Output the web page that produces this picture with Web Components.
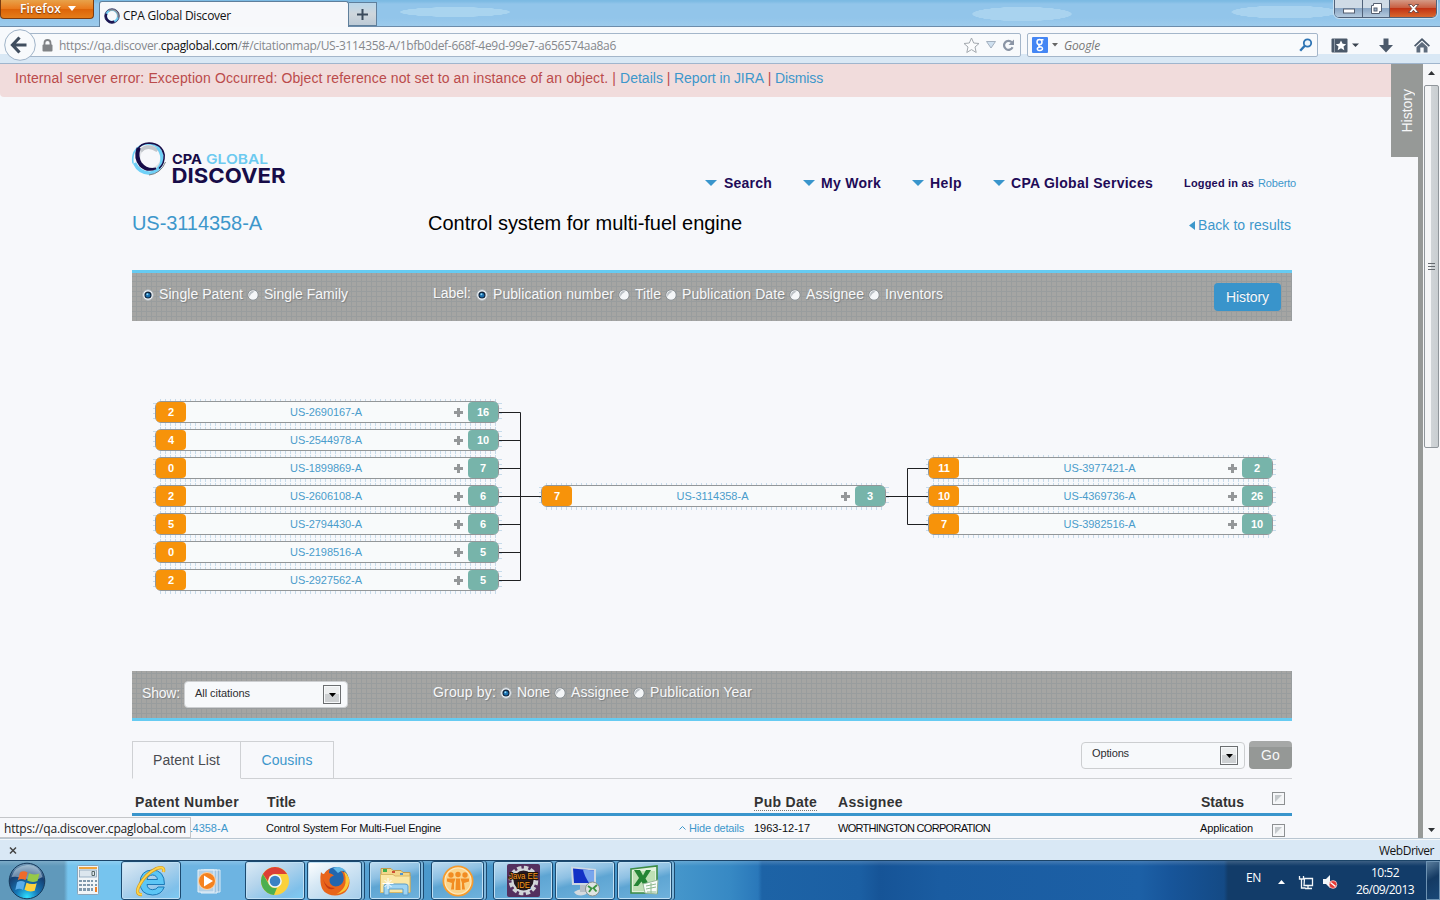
<!DOCTYPE html>
<html lang="en">
<head>
<meta charset="utf-8">
<title>CPA Global Discover</title>
<style>
html,body{margin:0;padding:0;width:1440px;height:900px;overflow:hidden;background:#f7f8fb}
body{font-family:"Liberation Sans",Arial,sans-serif;font-size:14px}
</style>
</head>
<body>
<desktop-screen></desktop-screen>
<script>
const UI = 'font-family:"Open Sans","Noto Sans",sans-serif;';
const RESET = '*{box-sizing:border-box}:host{box-sizing:border-box}svg{display:block;flex:none;overflow:visible}';
function make(name, css, html, after) {
  customElements.define(name, class extends HTMLElement {
    connectedCallback() {
      if (this.shadowRoot) return;
      const root = this.attachShadow({ mode: 'open' });
      const t = document.createElement('template');
      t.innerHTML = '<style>' + RESET + css + '</style>' + (typeof html === 'function' ? html(this) : html);
      root.append(t.content.cloneNode(true));
      if (after) after(this);
    }
  });
}

/* One-line label whose tracking is adjusted to fill the width in "w". */
function defineLabel() {
  make('x-t', ':host{display:block;flex:none;white-space:pre;line-height:1.25;padding-top:var(--drop,0)}span{display:inline-block}', '<span><slot></slot></span>', el => {
    const w = parseFloat(el.getAttribute('w'));
    const span = el.shadowRoot.querySelector('span');
    const n = el.textContent.length;
    span.style.letterSpacing = ((w - span.getBoundingClientRect().width) / n).toFixed(4) + 'px';
    el.style.width = w + 'px';
  });
}

/* ---------- small controls ---------- */
make('radio-option', `:host{display:flex;gap:5px;align-items:center;flex:none}
svg{margin-top:2px}`, el => `<svg width="12" height="12" viewBox="0 0 12 12">
<circle cx="6" cy="6" r="5.2" fill="#f4f6f8" stroke="${el.hasAttribute('checked') ? '#b7bec4' : '#858b90'}" stroke-width=".9"/>
${el.hasAttribute('checked') ? '<circle cx="6" cy="6" r="3.6" fill="#10263f"/><circle cx="6" cy="6.2" r="2.3" fill="#1a6fae"/><circle cx="5.4" cy="5.2" r="1" fill="#8fd8f7"/>' : '<path d="M2.4 8A4 4 0 0 1 7.5 2.4Q4 4 2.4 8Z" fill="#b9bfc4"/>'}</svg>
<x-t w="${el.getAttribute('w')}">${el.textContent}</x-t>`);

make('select-box', `:host{display:flex;width:164px;height:27px;border:1px solid #ccced0;border-radius:4px;background:#f7f9fb;padding:3px 6px 3px 10px;justify-content:space-between;font-size:11px;color:#2c2d30;text-shadow:none;flex:none}
i{width:18px;height:19px;border:1px solid #6b6e70;outline:1px solid #f7f9fb;outline-offset:-2px;background:linear-gradient(#eceeef 45%,#cdd0d2 45%);display:flex;align-items:center;justify-content:center}`,
el => `<x-t w="${el.getAttribute('w')}">${el.textContent}</x-t><i><svg width="7" height="4"><path d="M0 0h7L3.500 4z" fill="#000"/></svg></i>`);

make('check-box', `:host{display:block;width:13px;height:13px;border:1px solid #8d9092;background:#f6f7f9;padding:2px}
i{display:block;width:7px;height:7px;background:linear-gradient(135deg,#c4c8cb 48%,#f1f3f4 52%)}`, '<i></i>');

make('tool-bar', `:host{display:flex;align-items:center;height:51px;color:#f7f8f9;text-shadow:1px 1px 1px #7b7f81;background-color:#a5a5a3;
background-image:repeating-linear-gradient(90deg,transparent 0 4px,#999d9e 4px 5px),repeating-linear-gradient(0deg,transparent 0 4px,#999d9e 4px 5px)}
:host([edge=top]){border-top:3px solid #66cbf2;padding:0 11px 6px 10px}
:host([edge=bottom]){height:50px;border-bottom:3px solid #66cbf2;padding:0 11px 4px 10px}`, '<slot></slot>');

/* ---------- browser chrome ---------- */
const swirl = `<svg width="16" height="16" viewBox="0 0 34 34"><g fill="none"><circle cx="17" cy="17" r="13" stroke="#6ccaf0" stroke-width="5"/><path d="M5 12A13 13 0 0 0 22 29" stroke="#1c1250" stroke-width="5"/><path d="M10 6A13 13 0 0 1 30 20" stroke="#8f9499" stroke-width="4"/><circle cx="17" cy="17" r="15.500" stroke="#2b2a5c" stroke-width="1.600"/></g></svg>`;

make('tab-strip', `:host{display:flex;height:27px;${UI}font-size:12px;border-bottom:1px solid #6c8cab;
background:radial-gradient(ellipse 90px 8px at 455px 12px,#a9d4ef 60%,transparent 62%),radial-gradient(ellipse 70px 10px at 1022px 14px,#a9d3ef 70%,transparent 72%),radial-gradient(ellipse 75px 9px at 1285px 12px,#a9d3ef 70%,transparent 72%),linear-gradient(#7cbae3 0 1px,#92c5ea 4px 18px,#9dcbec)}
.ff{width:94px;height:19px;border:1px solid #7c3c10;border-top:0;border-radius:0 0 4px 4px;background:linear-gradient(#e8a24a,#ea7a1c 48%,#dd6408 52%,#e57d1a);color:#fff;display:flex;gap:7px;padding-left:19px;font-weight:600;text-shadow:0 1px 1px #7c3c10}
.ff x-t{margin-top:1px}.ff svg{margin-top:6px}
.tab{width:250px;height:26px;margin:1px 0 0 5px;background:#f7f8fb;border:1px solid #5f7f9c;border-bottom:0;border-radius:3px 3px 0 0;display:flex;align-items:center;padding:2px 0 0 4px;gap:3px;color:#111}
.new{width:28px;height:24px;margin-top:2px;border:1px solid #5f7f9c;border-left:0;background:linear-gradient(#b9d6ea,#cfd6dc 50%,#bccad6);display:flex;align-items:center;justify-content:center}
.win{margin:0 3px 0 auto;width:103px;height:18px;border:1px solid #50627a;border-top:0;border-radius:0 0 5px 5px;display:flex;overflow:hidden;outline:1px solid #c7dff0}
.win b{display:flex;align-items:center;justify-content:center;border-right:1px solid #50627a;background:linear-gradient(#cfdbe6 45%,#8aa6c4 50%,#b3c9dd);width:28px}
.win b+b{width:27px}.win b:last-child{flex:1;border:0;background:linear-gradient(#d49a86 0,#c95f42 45%,#c23314 50%,#d8672e)}`,
`<div class="ff"><x-t w="41">Firefox</x-t><svg width="8" height="5"><path d="M0 0h8L4 5z" fill="#fff"/></svg></div>
<div class="tab">${swirl}<x-t w="108">CPA Global Discover</x-t></div>
<div class="new"><svg width="11" height="11"><path d="M4.500 0h2v4.500h4.500v2H6.500V11h-2V6.500H0v-2h4.500z" fill="#3b4b5c"/></svg></div>
<div class="win"><b><svg width="12" height="10"><rect x=".5" y="5" width="11" height="4" fill="#fff" stroke="#555f70"/></svg></b><b><svg width="13" height="13"><path d="M3.500 1.500h8v8h-2v2h-8v-8h2z" fill="#fff" stroke="#555f70"/><rect x="4" y="6" width="3" height="3" fill="#9db4cc" stroke="#555f70"/></svg></b><b><svg width="13" height="11"><path d="M1.500 1.500h3l2 2.200 2-2.200h3l-3.300 4 3.300 4h-3l-2-2.300-2 2.300h-3l3.300-4z" fill="#fff" stroke="#5a3a38" stroke-width=".8"/></svg></b></div>`);

make('nav-bar', `:host{display:flex;height:37px;background:linear-gradient(#f7f9fc 27px,#d9e8f5 27px);border-bottom:1px solid #9fb5cd;${UI}font-size:12px;padding-top:2px;align-items:flex-start}
.back{margin:0 0 0 4px;z-index:1}
.url,.search{height:24px;margin-top:4px;border:1px solid #a4b6ca;background:#f8fafc;display:flex;align-items:center;border-radius:2px}
.url{width:1003px;margin-left:-18px;padding-left:23px;color:#85888c}.url em{font-style:normal;color:#111}
.url x-t{margin-left:6px}.search{width:291px;margin-left:6px;padding-left:4px;color:#777}
.search x-t{margin-left:6px;font-style:italic}`,
`<svg class="back" width="32" height="32"><circle cx="16" cy="16" r="15.300" fill="#f8fafc" stroke="#9fb3c8"/><path d="M15.500 8.500L8.500 16l7 7.500M9 16h13.500" stroke="#3f4d5e" stroke-width="3.200" fill="none"/></svg>
<div class="url"><svg width="11" height="13"><path d="M2.500 6V4a3 3 0 0 1 6 0v2" fill="none" stroke="#808386" stroke-width="1.800"/><rect x=".5" y="5.500" width="10" height="7" rx="1" fill="#808386"/></svg><x-t w="557">https://qa.discover.<em>cpaglobal.com</em>/#/citationmap/US-3114358-A/1bfb0def-668f-4e9d-99e7-a656574aa8a6</x-t>
<svg style="margin-left:347px" width="17" height="17"><path d="M8.500 1l2.200 5 5.300.5-4 3.500 1.200 5.500-4.700-2.900-4.700 2.900L5 10 1 6.500 6.300 6z" fill="#fbfcfd" stroke="#a3a9af"/></svg>
<svg style="margin-left:6px" width="10" height="8"><path d="M.5.500h9L5 7z" fill="#cfe0ef" stroke="#a3b0bf"/></svg>
<svg style="margin-left:6px" width="13" height="13"><path d="M9.800 3.200A4.500 4.500 0 1 0 10.600 8.300" fill="none" stroke="#8b95a5" stroke-width="2.200"/><path d="M12 .5v5.500H6.500z" fill="#8b95a5"/></svg></div>
<div class="search"><svg width="16" height="16"><rect width="16" height="16" rx="1" fill="#4486f4"/><g fill="none" stroke="#fff" stroke-width="1.500"><ellipse cx="7.500" cy="5" rx="2.500" ry="2.600"/><path d="M9 2.800h2.500M7.500 7.600q-1.700 1.300.8 2.100 3 .8 1.900 2.900-1.600 1.700-4.300.5-1.500-1.600.6-2.800l2-.3"/></g></svg><svg style="margin-left:4px" width="6" height="4"><path d="M0 0h6L3 3.500z" fill="#666"/></svg><x-t w="36">Google</x-t>
<svg style="margin-left:199px" width="14" height="14"><circle cx="8.500" cy="5" r="3.700" fill="#eef6fc" stroke="#2d74b4" stroke-width="1.800"/><path d="M5.800 7.800L1.200 12.800" stroke="#2d74b4" stroke-width="2.400"/></svg></div>
<svg style="margin:9px 0 0 13px" width="28" height="15"><rect x=".5" y=".5" width="16" height="14" rx="1" fill="#4a5869"/><path d="M3.500 1v13" stroke="#8c98a5"/><path d="M10 2.500l1.600 3.300 3.600.4-2.700 2.400.8 3.600-3.300-1.900-3.300 1.900.8-3.600L4.800 6.200l3.600-.4z" fill="#fff"/><path d="M21 5.500h7L24.500 9z" fill="#39434f"/></svg>
<svg style="margin:9px 0 0 20px" width="14" height="15"><path d="M4.500.500h5v6.500H14L7 14.500 0 7h4.500z" fill="#4c5a6b"/></svg>
<svg style="margin:9px 0 0 21px" width="16" height="15"><path d="M8 0L0 7.500l1.200 1.200L8 2.600l6.800 6.100L16 7.500z" fill="#4c5a6b"/><path d="M8 4L2.500 9v5.500h3.800V9.500h3.400v5h3.800V9z" fill="#5d6b7c"/></svg>`);

/* ---------- page header ---------- */
make('site-logo', ':host{display:block;flex:none;width:155px;height:50px}', `<svg width="155" height="50" viewBox="132 140 155 50"><g fill="none">
<circle cx="150.300" cy="157.700" r="11.500" stroke="#dfe2e6" stroke-width="3"/>
<path d="M140.500 151Q147 143.500 157.500 150.500" stroke="#c3c7cc" stroke-width="3.500"/>
<path d="M134.500 163Q139 173 150 173.200 158 172 161.300 164 164 155 157.500 147" stroke="#6fd0f7" stroke-width="3.400"/>
<path d="M133 163.500Q131 150 142 145 153 141.500 160.500 150" stroke="#6fd0f7" stroke-width="1.600"/>
<path d="M137.300 148.500Q134 158 140 165.500 147 172.500 156 168.500 147 170.500 141 163 137 157 139.500 149Z" fill="#170c48" stroke="#170c48" stroke-width="1.800"/>
<path d="M137 150Q141 143 149 143 162 143.500 164.200 155 164.500 164 159 168.500" stroke="#170c48" stroke-width="1.500"/>
<path d="M165.500 162Q161 173.500 149 175" stroke="#7c8186"/></g>
<g font-family="Inter,sans-serif" font-weight="700" fill="#170c48"><text x="172" y="164" font-size="13.600" textLength="30" lengthAdjust="spacingAndGlyphs">CPA</text><text x="206" y="164" font-size="13.600" font-weight="600" fill="#6ccaf0" textLength="62" lengthAdjust="spacingAndGlyphs">GLOBAL</text><text x="171.500" y="182.700" font-size="20.300" textLength="114" lengthAdjust="spacingAndGlyphs">DISCOVER</text></g></svg>`);

make('menu-item', ':host{display:flex;gap:6px;align-items:center;font-weight:bold;color:#210b57;flex:none}:host([first]){gap:7px}', el => `<svg width="12" height="6"><path d="M0 0h12L6 6z" fill="#3995cc"/></svg><x-t w="${el.getAttribute('w')}">${el.textContent}</x-t>`);

make('page-header', `:host{display:block;width:1164px}
.top{display:flex;height:64px}
nav{display:flex;height:17px;margin-top:34px;align-items:center;margin-left:418px}
nav x-t{font-size:11px}a{color:#3d97cb}
.title{display:flex;height:32px;align-items:center;font-size:20px;margin-top:2px}
.title a{flex:none}`,
`<div class="top"><site-logo></site-logo><nav>
<menu-item first w="48">Search</menu-item><menu-item w="60" style="margin-left:31px">My Work</menu-item><menu-item w="32" style="margin-left:31px">Help</menu-item><menu-item w="142" style="margin-left:31px">CPA Global Services</menu-item>
<x-t w="70" style="margin-left:31px;font-weight:bold;color:#210b57">Logged in as</x-t><a style="margin-left:4px"><x-t w="38">Roberto</x-t></a></nav></div>
<div class="title"><a><x-t w="130">US-3114358-A</x-t></a><x-t w="314" style="margin-left:166px;color:#000">Control system for multi-fuel engine</x-t>
<svg style="margin:7px 3px 0 447px" width="6" height="9"><path d="M6 0v9L0 4.500z" fill="#3d97cb"/></svg><a style="font-size:14px;margin-top:6px"><x-t w="93">Back to results</x-t></a></div>`);

/* ---------- citation map ---------- */
make('patent-node', `:host{display:flex;position:relative;width:345px;height:22px;border:1px solid #939698;border-radius:6px;align-items:stretch;background:#f8fafb;font-size:11px;color:#4a9ccb}
:host::before{content:"";position:absolute;z-index:-1;inset:-3px -4px -4px -3px;background:repeating-linear-gradient(90deg,transparent 0 4px,#c6dbeb 4px 5px) 3px 0/calc(100% - 6px) 100% no-repeat,repeating-linear-gradient(0deg,transparent 0 4px,#c6dbeb 4px 5px) 0 3px/100% calc(100% - 6px) no-repeat}
b{width:30px;display:flex;align-items:center;justify-content:center;color:#fff;border-radius:4px;flex:none}
.in{background:#f7930a}.out{background:#77b4aa}
.id{flex:1;display:flex;justify-content:center;align-items:center;padding-left:12px}
svg{margin:6px 5px 0 0}`,
el => { const [i, id, o] = el.getAttribute('data').split(' ');
 return `<b class="in">${i}</b><div class="id"><x-t w="72">${id}</x-t></div><svg width="9" height="9"><path d="M3 0h3v3h3v3H6v3H3V6H0V3h3z" fill="#949799"/></svg><b class="out">${o}</b>`; });

make('citation-map', `:host{display:flex;height:350px;padding:80px 19px 0 23px;align-items:flex-start;isolation:isolate}
.col{display:flex;flex-direction:column;gap:6px}.left patent-node{width:344px}.mid{margin-top:84px}.right{margin-top:56px}`,
`<div class="col left">${['2 US-2690167-A 16','4 US-2544978-A 10','0 US-1899869-A 7','2 US-2606108-A 6','5 US-2794430-A 6','0 US-2198516-A 5','2 US-2927562-A 5'].map(d => `<patent-node data="${d}"></patent-node>`).join('')}</div>
<svg width="42" height="190"><path d="M0 11.500h21.500v168H0M0 39.500h21.500M0 67.500h21.500M0 95.500h42M0 123.500h21.500M0 151.500h21.500" fill="none" stroke="#1f2022"/></svg>
<patent-node class="mid" data="7 US-3114358-A 3"></patent-node>
<svg width="42" height="190"><path d="M0 95.500h42M42 67.500H21.500v56H42" fill="none" stroke="#1f2022"/></svg>
<div class="col right">${['11 US-3977421-A 2','10 US-4369736-A 26','7 US-3982516-A 10'].map(d => `<patent-node data="${d}"></patent-node>`).join('')}</div>`);

/* ---------- results ---------- */
make('tab-row', `:host{display:flex;height:38px;margin-top:20px;box-shadow:inset 0 -1px #cfd1d4}
.t{height:38px;border:1px solid #cfd1d4;display:flex;justify-content:center;align-items:center;color:#4a4b50}
.a{width:109px;border-bottom-color:#f7f8fb;background:#f7f8fb}.b{width:93px;border-left:0;color:#3d97cb}
select-box{margin:1px 4px 0 747px}
.go{width:43px;height:28px;border-radius:4px;background:linear-gradient(#a6a8a7 6px,#959896 6px);color:#f5f6f7;display:flex;align-items:center;justify-content:center}`,
`<div class="t a"><x-t w="67">Patent List</x-t></div><div class="t b"><x-t w="51">Cousins</x-t></div><select-box w="37" style="--drop:1px">Options</select-box><div class="go"><x-t w="19">Go</x-t></div>`);

make('patent-table', `:host{display:block}
.r{display:grid;grid-template-columns:134px 413px 75px 84px 362px 72px 20px;align-items:center}
.h{height:37px;border-bottom:3px solid #3995cc;color:#333;font-weight:bold;padding-top:12px}
.d{height:23px;font-size:11px;color:#0c0c0e;padding-top:1px}
.u{--drop:1px;border-bottom:1px dotted #777;width:63px;height:18px;margin-top:-1px}a{color:#3d97cb}
.num{margin-left:24px}`,
`<div class="r h"><x-t w="104" style="margin-left:3px">Patent Number</x-t><x-t w="29" style="margin-left:1px">Title</x-t><i></i><div class="u"><x-t w="63">Pub Date</x-t></div><x-t w="65">Assignee</x-t><x-t w="43" style="margin-left:1px">Status</x-t><check-box style="margin-top:-7px"></check-box></div>
<div class="r d"><a class="num"><x-t w="72">US-3114358-A</x-t></a><x-t w="175">Control System For Multi-Fuel Engine</x-t><a style="display:flex;gap:3px;align-items:center"><svg width="7" height="4"><path d="M.5 3.500l3-3 3 3" fill="none" stroke="#3d97cb"/></svg><x-t w="55">Hide details</x-t></a><x-t w="56">1963-12-17</x-t><x-t w="152">WORTHINGTON CORPORATION</x-t><x-t w="53">Application</x-t><check-box style="margin-top:5px"></check-box></div>`);

make('web-page', `:host{--drop:2px;display:flex;flex:none;height:775px;overflow:hidden;position:relative;background:#f7f8fb;border-bottom:1px solid #b9c6d1}
.page{width:1391px;flex:none}
.alert{display:flex;height:33px;background:#f1dcdc;color:#bb4b4b;padding:4px 15px;border-radius:0 0 0 4px}.link{color:#3d97cb}
main{width:1160px;margin:43px 0 0 132px}
.side{width:32px;display:flex;flex-direction:column;align-items:flex-end;z-index:1}
.tab{width:32px;height:93px;background:#969997;color:#f6f7f8;display:flex;align-items:center;justify-content:center;flex:none}
.tab span{writing-mode:vertical-rl;transform:rotate(180deg);line-height:18px}
.strip{width:5px;flex:1;background:#969997}
.scroll{width:17px;display:flex;flex-direction:column;align-items:center;background:#f6f7f9}
.thumb{width:15px;height:363px;margin-top:10px;border:1px solid #90969b;border-radius:2px;background:linear-gradient(90deg,#f5f6f7 45%,#d0d4d7 50%,#c9ced1);display:flex;align-items:center;justify-content:center}
.status{position:absolute;left:0;bottom:0;width:191px;height:21px;border:1px solid #c4c6c9;border-left:0;background:#f7f8fb;padding:1px 0 0 4px;${UI}font-size:12px;color:#222}`,
`<div class="page"><div class="alert"><x-t w="605">Internal server error: Exception Occurred: Object reference not set to an instance of an object. | </x-t><x-t class="link" w="43">Details</x-t><x-t w="11"> | </x-t><x-t class="link" w="90">Report in JIRA</x-t><x-t w="11"> | </x-t><x-t class="link" w="48">Dismiss</x-t></div>
<main><page-header></page-header>
<tool-bar edge="top" style="margin-top:32px"><div style="display:flex;gap:4px"><radio-option checked w="84">Single Patent</radio-option><radio-option w="84">Single Family</radio-option></div>
<x-t w="38" style="margin:-2px 5px 0 85px">Label:</x-t><div style="display:flex;gap:4px"><radio-option checked w="121">Publication number</radio-option><radio-option w="26">Title</radio-option><radio-option w="103">Publication Date</radio-option><radio-option w="58">Assignee</radio-option><radio-option w="58">Inventors</radio-option></div>
<div style="margin:6px 0 0 auto;width:67px;height:28px;border-radius:4px;background:#3994cb;display:flex;align-items:center;justify-content:center;text-shadow:0 -1px 0 #2b7fb4"><x-t w="43">History</x-t></div></tool-bar>
<citation-map></citation-map>
<tool-bar edge="bottom"><x-t w="38" style="margin-right:4px;margin-top:1px">Show:</x-t><select-box w="55" style="margin-top:4px">All citations</select-box>
<x-t w="63" style="margin:-1px 4px 0 85px">Group by:</x-t><div style="display:flex;gap:4px;margin-top:-2px"><radio-option checked w="33">None</radio-option><radio-option w="58">Assignee</radio-option><radio-option w="102">Publication Year</radio-option></div></tool-bar>
<tab-row></tab-row><patent-table></patent-table></main></div>
<div class="side"><div class="tab"><span>History</span></div><div class="strip"></div></div>
<div class="scroll"><svg style="margin-top:7px" width="7" height="4"><path d="M0 4h7L3.500 0z" fill="#2f3235"/></svg><div class="thumb"><svg width="7" height="8"><path d="M0 .5h7M0 3.500h7M0 6.500h7" stroke="#666b70"/></svg></div><svg style="margin-top:auto;margin-bottom:6px" width="7" height="4"><path d="M0 0h7L3.500 4z" fill="#2f3235"/></svg></div>
<div class="status"><x-t w="182">https://qa.discover.cpaglobal.com</x-t></div>`);

make('addon-bar', `:host{display:flex;justify-content:space-between;align-items:center;height:21px;padding:0 6px 0 9px;background:#d9e8f5;border-top:1px solid #f4f8fb;${UI}font-size:12px;color:#141414}`,
`<svg width="8" height="7"><path d="M1 .5l6 6M7 .5l-6 6" stroke="#444" stroke-width="1.500"/></svg><x-t w="55">WebDriver</x-t>`);

/* ---------- taskbar ---------- */
make('task-button', `:host{display:flex;align-items:center;justify-content:center;flex:none;height:39px;border:1px solid #1c4a70;border-radius:3px;box-shadow:inset 0 0 0 1px #bfe0f5;background:linear-gradient(165deg,#bfdcf0 0,#8dc0e3 35%,#5ea5d3 52%,#6fb2dc)}
:host([active]){background:linear-gradient(150deg,#fff 0,#d6e8f5 40%,#a5cdea)}
:host([lit]){background:linear-gradient(150deg,#dcebf6 0,#b4d4ec 40%,#7fc0ea 80%,#7dcbf3)}
:host([plain]){border-color:transparent;box-shadow:none;background:none}
:host([stack]){box-shadow:inset 0 0 0 1px #bfe0f5,2px 0 0 #7db6db,3px 0 0 #1c4a70}`, '<slot></slot>');

const icons = {
orb: `<svg width="38" height="38" viewBox="0 0 38 38"><defs><radialGradient id="o" cx=".5" cy=".95" r=".9"><stop offset="0" stop-color="#2fe0ff"/><stop offset=".35" stop-color="#1678b8"/><stop offset=".75" stop-color="#163e70"/><stop offset="1" stop-color="#6f96b5"/></radialGradient></defs><circle cx="19" cy="19" r="17.800" fill="url(#o)" stroke="#173a5c"/><path d="M3.500 15Q7 4 19 3T34.500 15Q27 20 19 17T3.500 15Z" fill="#dcebf5" opacity=".45"/><path d="M12 10.500q3.500-2.500 7.500 0l-2 7.700q-4-2.200-7.700 0z" fill="#ee6b2b"/><path d="M21 11.300q4.500 2.200 10.500.2l-2 7.500q-5 2.300-10.300-.4z" fill="#96c948"/><path d="M9 20.200q4-2.400 8 0l-2 7.800q-3.500-2.500-7.700 0z" fill="#5badeb"/><path d="M18.500 20.700q5 2.500 10.200.5l-2 7.500q-5.500 1.800-10.200-1z" fill="#fdd13e"/></svg>`,
calc: `<svg width="22" height="30"><rect x=".5" y=".5" width="21" height="29" rx="1" fill="#f1f5f8" stroke="#8ba4b8"/><rect x="2" y="2" width="18" height="2" fill="#efa33c"/><rect x="2.500" y="5" width="17" height="7" fill="#dce6ee" stroke="#8ba4b8" stroke-width=".8"/><path d="M15 6.500h2.500v4H15z" fill="none" stroke="#566"/><g fill="#7f98ac"><path d="M2 15h3v2H2zm4 0h3v2H6zm4 0h3v2h-3zm4 0h2v2h-2zm4 0h2v2h-2zM2 19h3v2H2zm4 0h3v2H6zm4 0h3v2h-3zm4 0h2v2h-2zm4 0h2v2h-2zM2 23h3v3H2zm4 0h3v3H6zm4 0h3v3h-3zm4 0h2v3h-2z"/></g><rect x="18" y="22" width="2" height="5" fill="#ef7e23"/></svg>`,
ie: `<svg width="32" height="32" viewBox="0 0 32 32"><path d="M29.500 19.500H12q.5 5 5.500 5.200 4 0 5.500-2.700h6.200q-2.700 8-11.700 8Q5 29.500 5 17.500 5.500 5.500 17 5 29.500 5 29.500 19.500ZM12 14.500h10.500q-.7-4.300-5-4.500-4.700.2-5.500 4.500Z" fill="#5cc6f5" stroke="#1d78b6"/><path d="M7 29.500Q-.5 30 4.500 20 11 8.500 21.500 3.500 30 .5 28.500 7" fill="none" stroke="#d79a18" stroke-width="3.200"/><path d="M7 29.500Q-.5 30 4.500 20 11 8.500 21.500 3.500 30 .5 28.500 7" fill="none" stroke="#fcd34b" stroke-width="1.900"/></svg>`,
wmp: `<svg width="28" height="28"><path d="M7 3h16v22H7z" fill="#8db9da" stroke="#dcecf7"/><path d="M4 3h16v23H4z" fill="#9fc5e1" stroke="#e7f2fa"/><path d="M1 3h16v22H1z" fill="#b3d0e6" stroke="#e7f2fa"/><circle cx="10" cy="14" r="8.500" fill="#f5821f" stroke="#fbd6ac"/><path d="M7 8.500v11l9-5.500z" fill="#fff"/></svg>`,
chrome: `<svg width="30" height="30" viewBox="0 0 30 30"><circle cx="15" cy="15" r="14" fill="#fbd13a"/><path d="M2.900 8A14 14 0 0 1 27.100 8H15A7 7 0 0 0 9 11.500L8 15.500Z" fill="#dc3f35"/><path d="M2.900 8 9 18.500A7 7 0 0 0 17 21.700L14 29A14 14 0 0 1 2.900 8Z" fill="#4caf50"/><circle cx="15" cy="15" r="6.800" fill="#f2f6f8"/><circle cx="15" cy="15" r="5.300" fill="#3b82c4"/></svg>`,
ff: `<svg width="32" height="32" viewBox="0 0 32 32"><circle cx="17" cy="14.500" r="12.500" fill="#2266ae"/><path d="M14 3q7-3 13 3-5-1-8 2z" fill="#62b9e8"/><path d="M2 7q1 2 3 2 2-4 6-5-1.500 2.500-1 4 3 .5 5 2.500-4 1-4.500 4-.5 6 6 7 6.500-.5 8-6 1-6-3-10Q31 9 30.500 18 29 30 16 30.500 2.500 30 1.500 17 1 12 2 7Z" fill="#e8641b"/><path d="M25 6q7 6 4.500 14-3 8-12 9 8-4 9-11 .8-6-1.500-12Z" fill="#fbc736"/><path d="M4 14q3 9 12 9-8 5-12-9Z" fill="#c23a13"/></svg>`,
folder: `<svg width="33" height="31" viewBox="0 0 33 31"><path d="M2 8V3.500h10l2 2h8l2 2h7V27H1.500z" fill="#f3d68a" stroke="#c19a4b"/><path d="M4 4h4v3H4z" fill="#3fae49"/><path d="M13 6h3v2h-3z" fill="#cf4e35"/><path d="M21 8h3v2h-3z" fill="#4d93cf"/><path d="M1.500 9.500H14l2 1.500H31v16.500H1.500z" fill="#fae7a6" stroke="#d9b866"/><path d="M5 30V21q0-2 3-2h18q3 0 3 2v9h-5v-6H10v6z" fill="#9fd4f3" stroke="#5a9cc9"/><path d="M9 13v11M3.500 18.500h11M5.500 15l7 7M12.500 15l-7 7" stroke="#fff"/></svg>`,
people: `<svg width="32" height="32" viewBox="0 0 32 32"><circle cx="16" cy="16" r="14.600" fill="#fde9bd" stroke="#f79b2c" stroke-width="1.800"/><circle cx="16" cy="16" r="12.500" fill="#fbd48c"/><g fill="#f28c22"><circle cx="9" cy="10" r="2.700"/><circle cx="16" cy="9.500" r="2.700"/><circle cx="23" cy="10" r="2.700"/><path d="M5 13.500h8.500L12 18v6.500H9L10 18l-5-1.500zM14 13.500h4l.5 11.500h-5zM18.500 13.500H27v3L22 18l1 6.500h-3V18z"/></g></svg>`,
java: `<svg width="33" height="33" viewBox="0 0 33 33"><rect width="33" height="33" rx="2" fill="#54305f"/><circle cx="16.500" cy="16.500" r="12.800" fill="none" stroke="#cfd3d7" stroke-width="4" stroke-dasharray="4.300 2.400"/><circle cx="16.500" cy="16.500" r="11" fill="#241823" stroke="#d4d7db" stroke-width="2"/><g font-family="Liberation Sans,sans-serif" font-size="9.500" fill="#f69521" stroke="#211307" stroke-width="2" paint-order="stroke"><text x="2" y="15" textLength="29" lengthAdjust="spacingAndGlyphs">Java EE</text><text x="10" y="24" textLength="13" lengthAdjust="spacingAndGlyphs">IDE</text></g></svg>`,
rdp: `<svg width="32" height="32" viewBox="0 0 32 32"><path d="M5 27q7-5 14-1-1 4-7 4.500-5 0-7-3.500z" fill="#d5dade"/><path d="M11 19h6v8h-6z" fill="#b6bec6"/><path d="M2 1.500 27 4v16L3 20z" fill="#cdd8e2"/><path d="M4 3.500 25 5.500V18L5 18z" fill="#1231c6"/><path d="M14 4.500 25 5.500V18h-5q-5-8-6-13.500Z" fill="#78a5ed"/><circle cx="23.500" cy="24" r="7" fill="#dfe4e2" stroke="#89918e"/><path d="M19 21l3.500 2.500L20 27M28 20l-3.500 3 3 3.500" fill="none" stroke="#3c9442" stroke-width="1.900"/></svg>`,
excel: `<svg width="31" height="31" viewBox="0 0 31 31"><path d="M2 4 28 1v27H2z" fill="#e1f2dc" stroke="#3d8c45" stroke-width="1.600"/><path d="M4 6h22v20H4z" fill="#bfe0b5"/><path d="M5 5h6l3 5.500L17 5h5l-5.500 8.500L21 21h-6l-2.500-4.500L9 21H4.500L10 13z" fill="#258535"/><path d="M14 19l15-4-1 14-12-1z" fill="#f8fbf8" stroke="#98b99a"/><path d="M17 21l10-2M17 24l10-2M18 27h9M22 18v10" stroke="#8db98e"/></svg>`
};

make('task-bar', `:host{display:flex;height:40px;align-items:flex-start;border-top:1px solid #1b4468;color:#fff;${UI}font-size:12px;position:relative;overflow:hidden;
background:linear-gradient(rgba(255,255,255,.18),transparent 5px),linear-gradient(90deg,#6099bb 0 64px,#76c4ee 68px 120px,#6db4e2 182px 240px,#4a98cb 430px,#4596cb 676px,#3789c4 730px,#2a78ba 758px,#1d63a6 762px,#1b5fa3 860px,#165497 880px,#1a5ca1 940px,#1c60a6 1140px,#17559a 1170px,#144a85 1224px,#123c69 1228px)}
.tray{margin-left:auto;display:flex;height:39px;align-items:center}
.clock{width:64px;display:flex;flex-direction:column;align-items:center;margin:2px 9px 0 15px}.clock x-t{height:17px}
.peek{width:14px;height:39px;border:1px solid #6e93b3;background:linear-gradient(150deg,#5a7d9c,#143a63 45%,#1a4877)}`,
`<div style="padding:1px 0 0 8px;width:77px">${icons.orb}</div><div style="padding-top:4px;width:44px">${icons.calc}</div>
<task-button lit style="width:60px">${icons.ie}</task-button><task-button plain style="width:60px;margin:0 4px 0 0">${icons.wmp}</task-button>
<task-button lit style="width:60px">${icons.chrome}</task-button><task-button active stack style="width:55px;margin-left:2px">${icons.ff}</task-button>
<task-button stack style="width:52px;margin-left:7px">${icons.folder}</task-button><task-button stack style="width:53px;margin-left:10px">${icons.people}</task-button>
<task-button style="width:60px;margin-left:9px">${icons.java}</task-button><task-button style="width:60px;margin-left:2px">${icons.rdp}</task-button><task-button stack style="width:55px;margin-left:2px">${icons.excel}</task-button>
<div class="tray"><x-t w="15" style="margin-top:-6px">EN</x-t><svg style="margin:2px 0 0 17px" width="7" height="4"><path d="M0 4h7L3.500 0z" fill="#fff"/></svg>
<svg style="margin:2px 0 0 13px" width="16" height="16"><path d="M1.500 2v3h4V2M3.500 5v9h4M6.500 4.500h8v7H6zM10 12v2M7 14.500h7" fill="none" stroke="#f3f6f9" stroke-width="1.300"/></svg>
<svg style="margin:2px 0 0 8px" width="16" height="16"><path d="M1 5h3l4-4v13l-4-4H1z" fill="#f3f6f9"/><circle cx="11" cy="10.500" r="3.900" fill="#e53935" stroke="#fff" stroke-width=".6"/><path d="M8.500 8.500l5 4" stroke="#fff" stroke-width="1.400"/></svg>
<div class="clock"><x-t w="28">10:52</x-t><x-t w="58">26/09/2013</x-t></div><div class="peek"></div></div>`);

make('desktop-screen', ':host{display:flex;flex-direction:column;width:1440px;height:900px;overflow:hidden}', '<tab-strip></tab-strip><nav-bar></nav-bar><web-page></web-page><addon-bar></addon-bar><task-bar></task-bar>');

defineLabel();
</script>
</body>
</html>
